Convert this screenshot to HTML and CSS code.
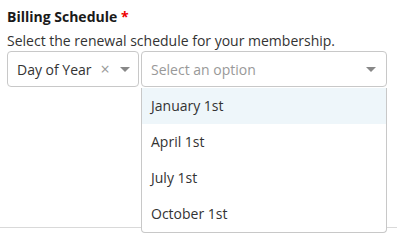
FILE: index.html
```html
<!DOCTYPE html>
<html>
<head>
<meta charset="utf-8">
<link rel="stylesheet" href="styles.css">
</head>
<body>
<div class="field">
  <div class="label">Billing Schedule <span class="req">*</span></div>
  <div class="help">Select the renewal schedule for your membership.</div>
  <div class="row">
    <div class="select first">
      <span class="value">Day of Year</span>
      <span class="clear">×</span>
      <span class="arrow"></span>
    </div>
    <div class="select second open">
      <span class="placeholder">Select an option</span>
      <span class="arrow"></span>
      <ul class="dropdown">
        <li class="active">January 1st</li>
        <li>April 1st</li>
        <li>July 1st</li>
        <li>October 1st</li>
      </ul>
    </div>
  </div>
</div>
</body>
</html>
```
FILE: styles.css
```css
html, body {
  margin: 0;
  background: #fff;
}
body {
  font-family: "Open Sans", sans-serif;
  color: #333;
  min-height: 240px;
}
.field {
  padding: 7px 7px 0 7px;
  height: 220px;
  border-bottom: 1px solid #d9d9d9;
}
.label {
  font-weight: 700;
  font-size: 14px;
  line-height: 20px;
  color: #1a1a1a;
}
.req {
  color: #e00;
}
.help {
  font-size: 14px;
  line-height: 20px;
  margin-top: 4px;
  color: #333;
}
.row {
  display: flex;
  gap: 2px;
}
.select {
  position: relative;
  box-sizing: border-box;
  height: 36px;
  border: 1px solid #c8c8c8;
  border-radius: 4px;
  display: flex;
  align-items: center;
  font-size: 14px;
  padding-left: 9px;
}
.first {
  width: 132px;
}
.second {
  width: 246px;
}
.value {
  color: #333;
}
.clear {
  color: #999;
  font-size: 16px;
  margin-left: 9px;
}
.arrow {
  width: 0;
  height: 0;
  border-left: 5px solid transparent;
  border-right: 5px solid transparent;
  border-top: 5px solid #888;
  margin-left: 10px;
}
.second .arrow {
  margin-left: auto;
  margin-right: 10px;
}
.placeholder {
  color: #999;
}
.dropdown {
  position: absolute;
  z-index: 10;
  top: 36px;
  left: -1px;
  right: -1px;
  margin: 0;
  padding: 0;
  list-style: none;
  background: #fff;
  border: 1px solid #c8c8c8;
  border-top: none;
  border-radius: 0 0 4px 4px;
}
.dropdown li {
  height: 36px;
  line-height: 36px;
  padding-left: 9px;
  color: #333;
}
.dropdown li.active {
  background: #eef6fa;
}
```
